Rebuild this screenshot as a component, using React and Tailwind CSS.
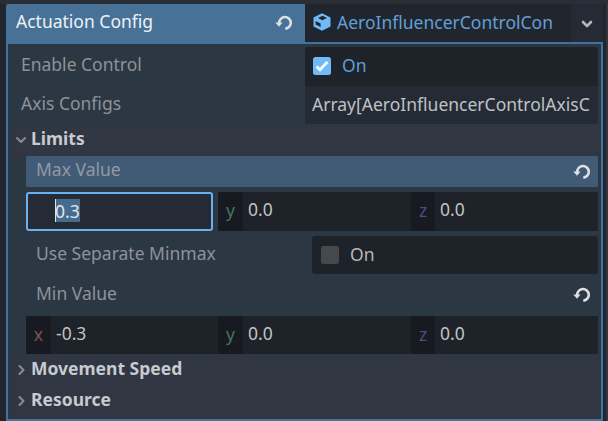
import React from "react";

const TEXT = "block whitespace-nowrap text-[17.5px] leading-[24px]";

function Revert({ className = "" }) {
  return (
    <svg className={"block shrink-0 " + className} width="18" height="16" viewBox="0 0 18 16" fill="none">
      <path d="M4.2 8.2A5.8 5.8 0 1 1 10.3 13.6" stroke="#dfe0e2" strokeWidth="2.6" />
      <path d="M0.3 7.5H7.6L4 11.8Z" fill="#dfe0e2" />
    </svg>
  );
}

function Chevron({ open, bright }) {
  return (
    <svg className="block shrink-0" width="12" height="12" viewBox="0 0 12 12" fill="none">
      <path
        d={open ? "M2 4L6 8L10 4" : "M4.5 2L8.5 6L4.5 10"}
        stroke={bright ? "#b4b6b9" : "#858b93"}
        strokeWidth={bright ? 2.6 : 2.1}
        strokeLinecap="round"
        strokeLinejoin="round"
      />
    </svg>
  );
}

function Cube() {
  return (
    <svg className="block shrink-0" width="18" height="18" viewBox="0 0 18 18">
      <path d="M9 0.2L17.5 4.4V13.4L9 17.8L0.5 13.4V4.4Z" fill="#70bafa" />
      <path d="M9.6 2.8L14 5L9.4 7.3L5 5.1Z" fill="#21262e" />
      <path d="M2.6 8L7.6 10.5V13.9L2.6 11.4Z" fill="#21262e" />
    </svg>
  );
}

function Axis({ name, value, color, width, labelWidth }) {
  return (
    <div className={"flex h-full " + width}>
      <div className={"h-full rounded-[2px] bg-[#171a21] pt-[6px] text-center " + labelWidth}>
        <span className={TEXT + " " + color}>{name}</span>
      </div>
      <span className={TEXT + " ml-[5px] mt-[5px] text-[#c1c2c4]"}>{value}</span>
    </div>
  );
}

function YZ() {
  return (
    <>
      <Axis name="y" value="0.0" color="text-[#44795a]" width="w-[193px]" labelWidth="w-[25px]" />
      <Axis name="z" value="0.0" color="text-[#574880]" width="w-[187px]" labelWidth="w-[24px]" />
    </>
  );
}

function Section({ title, open }) {
  return (
    <div className="ml-[3px] mr-[3px] flex h-[31px] bg-[#303642] pl-[4px]">
      <div className="mt-[9px]"><Chevron open={open} /></div>
      <span className={TEXT + " ml-[4px] mt-px font-bold text-[#c7cacf]"}>{title}</span>
    </div>
  );
}

export default function App() {
  return (
    <div className="flex h-[421px] w-[608px] flex-col overflow-hidden bg-[#21252e] font-['Noto_Sans',sans-serif]">
      <div className="h-[4px] shrink-0 bg-[#2a2e36]" />
      <div className="flex h-[417px]">
        <div className="flex w-[597px] ml-[6px] flex-col">
          <div className="flex h-[38px] shrink-0">
            <div className="flex w-[299px] rounded-tl-[2px] bg-[#477197] pl-[10px]">
              <span className={TEXT + " mt-[5px] text-[#edf1f4]"}>Actuation Config</span>
              <Revert className="ml-auto mr-[12px] mt-[11px]" />
            </div>
            <div className="flex w-[266px] bg-[#21262e] pl-[8px]">
              <div className="mt-[9px]"><Cube /></div>
              <span className={TEXT + " ml-[6px] mt-[6px] text-[#619fd6]"}>AeroInfluencerControlCon</span>
            </div>
            <div className="flex w-[32px] bg-[#252b34] pl-[10px] pt-[14px]">
              <Chevron open bright />
            </div>
          </div>
          <div className="flex h-[379px] flex-col border-2 border-[#45729b] bg-[#2c3744]">
            <div className="flex h-[42px] shrink-0 pt-[3px]">
              <span className={TEXT + " ml-[13px] mt-[5px] w-[284px] text-[#8d9298]"}>Enable Control</span>
              <div className="flex h-[39px] w-[293px] rounded-t-[2px] bg-[#1e2229] pl-[8px]">
                <svg className="mt-[10px] block" width="18" height="18" viewBox="0 0 18 18" fill="none">
                  <rect width="18" height="18" rx="2.5" fill="#70bafa" />
                  <path d="M3.6 9.5L7 12.8L14.4 5" stroke="white" strokeWidth="2.7" />
                </svg>
                <span className={TEXT + " ml-[11px] mt-[6px] text-[#619fd6]"}>On</span>
              </div>
            </div>
            <div className="flex h-[39px] shrink-0">
              <span className={TEXT + " ml-[13px] mt-[5px] w-[284px] text-[#8d9298]"}>Axis Configs</span>
              <div className="h-[38px] w-[293px] rounded-b-[2px] bg-[#252b34] pl-[7px] pt-[6px]">
                <span className={TEXT + " text-[#bfc1c4]"}>Array[AeroInfluencerControlAxisC</span>
              </div>
            </div>
            <Section title="Limits" open />
            <div className="ml-[18px] mr-[3px] flex h-[31px] shrink-0 rounded-[2px] bg-[#415b77] pl-[10px]">
              <span className={TEXT + " mt-px text-[#9299a2]"}>Max Value</span>
              <Revert className="ml-auto mr-[7px] mt-[8px]" />
            </div>
            <div className="ml-[18px] mr-[3px] mt-[5px] flex h-[39px] shrink-0">
              <div className="h-[39px] w-[187px] rounded-[3px] border-2 border-[#69b0f0] bg-[#252b34] pl-[27px] pt-[5px]">
                <span className={TEXT + " h-[23px] w-[25px] bg-[#466b8e] leading-[22px] text-[#e3e6e9] shadow-[inset_1px_0_0_#dfe3e8]"}>0.3</span>
              </div>
              <div className="ml-[5px] flex h-[39px] rounded-[2px] bg-[#1e2229]"><YZ /></div>
            </div>
            <div className="flex h-[38px] mt-[5px] shrink-0">
              <span className={TEXT + " ml-[28px] mt-[5px] w-[276px] text-[#8d9298]"}>Use Separate Minmax</span>
              <div className="flex h-[38px] w-[286px] rounded-[3px] bg-[#1e2229] pl-[9px]">
                <div className="mt-[10px] h-[18px] w-[18px] rounded-[2.5px] bg-[#464850]" />
                <span className={TEXT + " ml-[11px] mt-[6px] text-[#b7b8ba]"}>On</span>
              </div>
            </div>
            <div className="ml-[28px] mr-[10px] flex h-[42px] shrink-0">
              <span className={TEXT + " mt-[7px] text-[#8d9298]"}>Min Value</span>
              <Revert className="ml-auto mt-[13px]" />
            </div>
            <div className="ml-[18px] mr-[3px] flex h-[38px] shrink-0 rounded-[2px] bg-[#1e2229]">
              <Axis name="x" value="-0.3" color="text-[#7a574f]" width="w-[192px]" labelWidth="w-[25px]" />
              <YZ />
            </div>
            <div className="mx-[3px] h-px" />
            <Section title="Movement Speed" />
            <Section title="Resource" />
            <div className="mx-[3px] grow bg-[#303642]" />
          </div>
        </div>
        <div className="ml-[3px] w-[2px] bg-[#303540]" />
      </div>
    </div>
  );
}
